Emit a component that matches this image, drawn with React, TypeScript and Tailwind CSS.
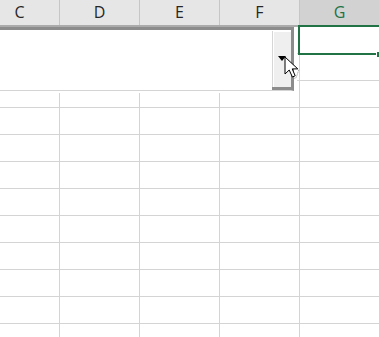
import React from "react";

const cols = ["C", "D", "E", "F", "G"];
const rows = Array.from({ length: 12 }, (_, i) => i);

function HeaderCell({ label, selected }: { label: string; selected?: boolean }) {
  return (
    <div
      className={`flex h-full w-[80px] shrink-0 items-center justify-center border-r border-[#c6c6c6] pb-[2px] ${
        selected ? "bg-[#d2d2d2] text-[#217346]" : "bg-[#e6e6e6] text-[#262626]"
      }`}
    >
      {label}
    </div>
  );
}

function Cursor() {
  return (
    <svg width="18" height="24" viewBox="0 0 18 24" className="absolute left-[284px] top-[56px]">
      <path
        d="M1 1 L1 18 L5.2 14 L8.4 21 L11.2 19.8 L8.2 12.9 L13.8 12.9 Z"
        fill="#fff"
        stroke="#000"
        strokeWidth="1"
        strokeLinejoin="miter"
      />
      <path d="M14.8 13.8 L12.2 21.6 L9.2 22.8" fill="none" stroke="#8a8a8a" strokeWidth="1" strokeDasharray="1 1" />
    </svg>
  );
}

export default function App() {
  return (
    <div
      className="relative h-[337px] w-[379px] overflow-hidden bg-white"
      style={{ fontFamily: '"Open Sans", "Noto Sans", sans-serif' }}
    >
      {/* column headers */}
      <div className="ml-[-20px] flex h-[27px] border-b-2 border-[#ababab] text-[16px]">
        {cols.map((c) => (
          <HeaderCell key={c} label={c} selected={c === "G"} />
        ))}
      </div>

      {/* grid */}
      <div className="ml-[-20px]">
        {rows.map((r) => (
          <div key={r} className="flex h-[27px] border-b border-[#d4d4d4]">
            {cols.map((c) => (
              <div key={c} className="h-full w-[80px] shrink-0 border-r border-[#d4d4d4]" />
            ))}
          </div>
        ))}
      </div>

      {/* combo box */}
      <div className="absolute left-0 top-[27px] h-[66px] w-[297px] bg-white">
        <div className="flex h-[64px] w-[294px] border-r-[3px] border-t-[3px] border-[#8c8c8c] border-b border-b-[#d4d4d4]">
          <div className="flex-1" />
          <div className="flex w-[19px] flex-col">
            <div className="mt-[1px] flex h-[56px] items-center justify-center border-l border-[#d6d6d6]">
              <div className="flex h-full w-full items-center justify-center border-l border-t border-white bg-[#efefef]">
                <div className="ml-[-2px] mt-[-2px] h-0 w-0 border-x-[4px] border-t-[5px] border-x-transparent border-t-black" />
              </div>
            </div>
            <div className="h-[3px] bg-[#8c8c8c]" />
          </div>
        </div>
      </div>

      {/* selected cell */}
      <div className="absolute left-[298px] top-[25px] h-[30px] w-[90px] border-2 border-[#217346]" />
      <div className="absolute left-[376px] top-[51px] h-[6px] w-[6px] border-l border-t border-white bg-[#217346]" />

      <Cursor />
    </div>
  );
}
